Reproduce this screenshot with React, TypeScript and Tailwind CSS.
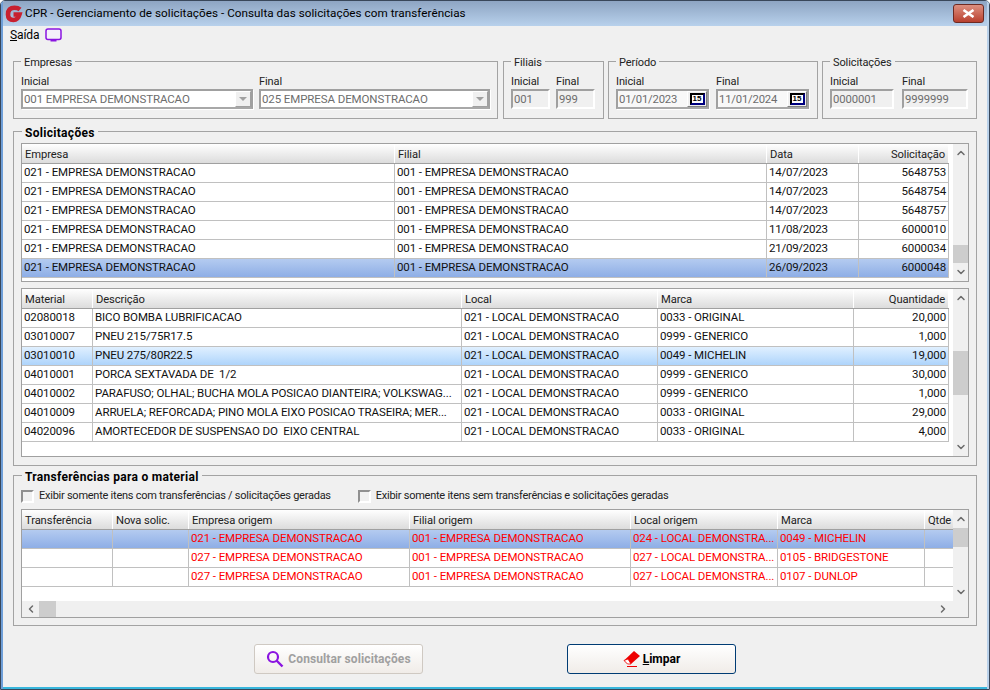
import { ChevronUp, ChevronDown, ChevronLeft, ChevronRight } from "lucide-react";

type Col = { title: string; width: string; right?: boolean; cellClass?: string };

const solicCols: Col[] = [
  { title: "Empresa", width: "w-[373px]" },
  { title: "Filial", width: "w-[372px]" },
  { title: "Data", width: "w-[92px]", cellClass: "tracking-[-0.25px]" },
  { title: "Solicitação", width: "w-[90px]", right: true },
];

const solicRows = [
  ["14/07/2023", "5648753"],
  ["14/07/2023", "5648754"],
  ["14/07/2023", "5648757"],
  ["11/08/2023", "6000010"],
  ["21/09/2023", "6000034"],
  ["26/09/2023", "6000048"],
].map(([d, n]) => ["021 - EMPRESA DEMONSTRACAO", "001 - EMPRESA DEMONSTRACAO", d, n]);

const matCols: Col[] = [
  { title: "Material", width: "w-[71px]" },
  { title: "Descrição", width: "w-[369px]" },
  { title: "Local", width: "w-[196px]" },
  { title: "Marca", width: "w-[196px]" },
  { title: "Quantidade", width: "w-[95px]", right: true },
];

const matRows = [
  ["02080018", "BICO BOMBA LUBRIFICACAO", "021 - LOCAL DEMONSTRACAO", "0033 - ORIGINAL", "20,000"],
  ["03010007", "PNEU 215/75R17.5", "021 - LOCAL DEMONSTRACAO", "0999 - GENERICO", "1,000"],
  ["03010010", "PNEU 275/80R22.5", "021 - LOCAL DEMONSTRACAO", "0049 - MICHELIN", "19,000"],
  ["04010001", "PORCA SEXTAVADA DE  1/2", "021 - LOCAL DEMONSTRACAO", "0999 - GENERICO", "30,000"],
  ["04010002", "PARAFUSO; OLHAL; BUCHA MOLA POSICAO DIANTEIRA; VOLKSWAG...", "021 - LOCAL DEMONSTRACAO", "0999 - GENERICO", "1,000"],
  ["04010009", "ARRUELA; REFORCADA; PINO MOLA EIXO POSICAO TRASEIRA; MER...", "021 - LOCAL DEMONSTRACAO", "0033 - ORIGINAL", "29,000"],
  ["04020096", "AMORTECEDOR DE SUSPENSAO DO  EIXO CENTRAL", "021 - LOCAL DEMONSTRACAO", "0033 - ORIGINAL", "4,000"],
];

const transCols: Col[] = [
  { title: "Transferência", width: "w-[91px]" },
  { title: "Nova solic.", width: "w-[76px]" },
  { title: "Empresa origem", width: "w-[221px]" },
  { title: "Filial origem", width: "w-[221px]" },
  { title: "Local origem", width: "w-[147px]" },
  { title: "Marca", width: "w-[147px]" },
  { title: "Qtde", width: "w-[40px]" },
];

const transRows = [
  ["", "", "021 - EMPRESA DEMONSTRACAO", "001 - EMPRESA DEMONSTRACAO", "024 - LOCAL DEMONSTRA...", "0049 - MICHELIN", ""],
  ["", "", "027 - EMPRESA DEMONSTRACAO", "001 - EMPRESA DEMONSTRACAO", "027 - LOCAL DEMONSTRA...", "0105 - BRIDGESTONE", ""],
  ["", "", "027 - EMPRESA DEMONSTRACAO", "001 - EMPRESA DEMONSTRACAO", "027 - LOCAL DEMONSTRA...", "0107 - DUNLOP", ""],
];

const sunken = "border-2 border-t-[#a0a0a0] border-l-[#a0a0a0] border-r-white border-b-white";
const framed = "border-2 border-[#a0a0a0] border-b-[#a8a8a8] shadow-[1px_1px_0_#ffffff]";

function Label({ children }: { children: string }) {
  return <div className="h-[15px] leading-[15px]">{children}</div>;
}

function TextBox({ value, width }: { value: string; width: string }) {
  return (
    <div className={`${width} h-[20px] ${sunken} px-px leading-[18px] text-[11.3px] text-[#6d6d6d]`}>{value}</div>
  );
}

function Combo({ value }: { value: string }) {
  return (
    <div className={`flex-1 h-[20px] ${framed} bg-white flex justify-between pl-px text-[11.5px] text-[#6d6d6d] leading-[17px]`}>
      {value}
      <span className="w-[16px] h-[16px] bg-[#f0f0f0] border border-t-white border-l-white border-r-[#a0a0a0] border-b-[#a0a0a0] flex items-center justify-center">
        <span className="border-x-[4px] border-x-transparent border-t-[4px] border-t-[#a0a0a0]" />
      </span>
    </div>
  );
}

function DateBox({ value }: { value: string }) {
  return (
    <div className={`w-[93px] h-[20px] ${framed} bg-[#f8f8f8] flex justify-between pl-px text-[11.3px] tracking-[-0.2px] text-[#6d6d6d] leading-[18px]`}>
      {value}
      <span className="w-[20px] h-[16px] bg-[#f0f0f0] border border-t-white border-l-white border-r-[#808080] border-b-[#808080] flex items-center justify-center">
        <span className="w-[15px] h-[12px] bg-white border-2 border-black border-r-[#000080] border-b-[#000080] text-[8px] leading-[8px] font-bold tracking-normal text-black text-center font-['Liberation_Sans',sans-serif]">
          15
        </span>
      </span>
    </div>
  );
}

function Group({
  title,
  bold,
  className,
  children,
}: {
  title: string;
  bold?: boolean;
  className: string;
  children: React.ReactNode;
}) {
  return (
    <fieldset className={`min-w-0 border border-[#a3a3a3] px-[7px] ${className}`}>
      <legend
        className={`px-[3px] h-[15px] ${bold ? "ml-px leading-[19px] font-bold text-black text-[12px] tracking-[0.3px]" : "leading-[17px]"}`}
      >
        {title}
      </legend>
      {children}
    </fieldset>
  );
}

function ScrollArrow({ dir }: { dir: "up" | "down" | "left" | "right" }) {
  const Icon = { up: ChevronUp, down: ChevronDown, left: ChevronLeft, right: ChevronRight }[dir];
  return <Icon size={12} strokeWidth={3} className="text-[#6b6b6b]" />;
}

function VScroll({ thumbTop, thumbHeight }: { thumbTop: string; thumbHeight: string }) {
  return (
    <div className="w-[15px] bg-[#f0f0f0] flex flex-col shrink-0">
      <div className="h-[18px] flex items-center justify-center shrink-0">
        <ScrollArrow dir="up" />
      </div>
      <div className="flex-1 flex flex-col">
        <div className={thumbTop} />
        <div className={`${thumbHeight} bg-[#cdcdcd]`} />
      </div>
      <div className="h-[18px] flex items-center justify-center shrink-0">
        <ScrollArrow dir="down" />
      </div>
    </div>
  );
}

function Grid({
  cols,
  rows,
  selected,
  selectedClass,
  red,
  className,
  scroll,
  children,
}: {
  cols: Col[];
  rows: string[][];
  selected: number;
  selectedClass: string;
  red?: boolean;
  className: string;
  scroll: React.ReactNode;
  children?: React.ReactNode;
}) {
  return (
    <div className={`border border-[#a0a0a0] bg-white flex flex-col ${className}`}>
      <div className="flex flex-1 min-h-0">
        <div className="flex-1 min-w-0 overflow-hidden">
          <div className="flex w-max h-[20px] border-b border-[#a0a0a0] bg-gradient-to-b from-white to-[#dcdcdc]">
            {cols.map((c) => (
              <div
                key={c.title}
                className={`${c.width} shrink-0 border-r border-white px-[3px] leading-[21px] text-[11.2px] whitespace-nowrap overflow-hidden ${c.right ? "text-right" : ""}`}
              >
                {c.title}
              </div>
            ))}
          </div>
          {rows.map((row, i) => (
            <div
              key={i}
              className={`flex w-max h-[19px] border-b border-[#c0c0c0] text-[11.5px] ${i === selected ? selectedClass : ""} ${red ? "text-[#ff0000]" : "text-[#111]"}`}
            >
              {row.map((cell, j) => (
                <div
                  key={j}
                  className={`${cols[j].width} ${cols[j].cellClass ?? ""} shrink-0 border-r border-[#c0c0c0] px-[2px] leading-[17px] whitespace-pre overflow-hidden ${cols[j].right ? "text-right" : ""}`}
                >
                  {cell}
                </div>
              ))}
            </div>
          ))}
        </div>
        {scroll}
      </div>
      {children}
    </div>
  );
}

function Check({ label }: { label: string }) {
  return (
    <label className="flex items-center gap-[5px] tracking-[-0.25px]">
      <span className="w-[13px] h-[13px] border-2 border-t-[#909090] border-l-[#909090] border-r-white border-b-white bg-[#f0f0f0]" />
      {label}
    </label>
  );
}

export default function App() {
  return (
    <div className="w-[990px] h-[690px] border border-[#39475a] rounded-t-[5px] overflow-hidden">
      <div className="h-full flex flex-col border-l-[2px] border-r-[2px] border-l-[#6f9fd8] border-r-[#b9d1ea] bg-[#b9d1ea] text-[11px] tracking-[-0.1px] text-[#222] font-['Roboto','Liberation_Sans',sans-serif]">
        <div className="h-[25px] shrink-0 flex items-center justify-between bg-gradient-to-b from-[#8ea5c3] to-[#b8d1ec] pl-[2px] pr-[3px]">
          <div className="flex items-center gap-[2px] pt-[1px] text-[11.7px] tracking-[0.04px] text-black">
            <svg width="18" height="18" viewBox="0 0 18 18">
              <path
                d="M15 4.5 Q13 2.8 9.5 2.8 Q3 2.8 3 9.5 Q3 15 8.5 15 Q13 15 14.5 9.5 H8.5"
                fill="none"
                stroke="#c8202f"
                strokeWidth="4.6"
              />
            </svg>
            CPR - Gerenciamento de solicitações - Consulta das solicitações com transferências
          </div>
          <div className="w-[31px] h-[19px] rounded-[3px] border border-[#6e2a22] bg-gradient-to-b from-[#dd8f80] to-[#b83f2e] flex items-center justify-center">
            <svg width="13" height="9" viewBox="0 0 13 9">
              <path d="M1.5 1 L11.5 8 M11.5 1 L1.5 8" stroke="#fff" strokeWidth="2.6" />
            </svg>
          </div>
        </div>
        <div className="flex-1 bg-[#f0f0f0] flex flex-col px-[10px]">
          <div className="h-[18px] flex items-center gap-[6px] -ml-[3px] text-[12px] text-black">
            <span>
              <span className="underline">S</span>aída
            </span>
            <svg width="17" height="14" viewBox="0 0 17 14">
              <rect x="1" y="1" width="15" height="10.5" rx="2" fill="#f4f0fa" stroke="#8a14e0" strokeWidth="1.5" />
              <rect x="5.5" y="11.5" width="6" height="2" fill="#8a14e0" />
            </svg>
          </div>

          <div className="flex gap-[4px] mt-[10px] h-[65px]">
            <Group title="Empresas" className="w-[485px] mr-px">
              <div className="flex gap-[6px] pt-[5px]">
                <div className="w-[232px] flex flex-col">
                  <Label>Inicial</Label>
                  <div className="flex"><Combo value="001 EMPRESA DEMONSTRACAO" /></div>
                </div>
                <div className="w-[231px] flex flex-col">
                  <Label>Final</Label>
                  <div className="flex"><Combo value="025 EMPRESA DEMONSTRACAO" /></div>
                </div>
              </div>
            </Group>
            <Group title="Filiais" className="w-[101px]">
              <div className="flex gap-[6px] pt-[5px]">
                <div><Label>Inicial</Label><TextBox value="001" width="w-[39px]" /></div>
                <div><Label>Final</Label><TextBox value="999" width="w-[39px]" /></div>
              </div>
            </Group>
            <Group title="Período" className="w-[210px]">
              <div className="flex gap-[7px] pt-[5px]">
                <div><Label>Inicial</Label><DateBox value="01/01/2023" /></div>
                <div><Label>Final</Label><DateBox value="11/01/2024" /></div>
              </div>
            </Group>
            <Group title="Solicitações" className="w-[155px]">
              <div className="flex gap-[8px] pt-[5px]">
                <div><Label>Inicial</Label><TextBox value="0000001" width="w-[64px]" /></div>
                <div><Label>Final</Label><TextBox value="9999999" width="w-[66px]" /></div>
              </div>
            </Group>
          </div>

          <Group title="Solicitações" bold className="mt-[5px] h-[342px]">
            <Grid
              cols={solicCols}
              rows={solicRows}
              selected={5}
              selectedClass="bg-gradient-to-b from-[#b4cbf0] to-[#8eaee6]"
              className="h-[139px] mt-[4px]"
              scroll={<VScroll thumbTop="h-[83px]" thumbHeight="h-[18px]" />}
            />
            <Grid
              cols={matCols}
              rows={matRows}
              selected={2}
              selectedClass="bg-gradient-to-b from-[#e0f0ff] to-[#aed4fb]"
              className="h-[169px] mt-[6px]"
              scroll={<VScroll thumbTop="h-[44px]" thumbHeight="h-[44px]" />}
            />
          </Group>

          <Group title="Transferências para o material" bold className="mt-[2px] h-[158px]">
            <div className="flex gap-[27px] h-[26px] items-center">
              <Check label="Exibir somente itens com transferências / solicitações geradas" />
              <Check label="Exibir somente itens sem transferências e solicitações geradas" />
            </div>
            <Grid
              cols={transCols}
              rows={transRows}
              selected={0}
              selectedClass="bg-gradient-to-b from-[#b4cbf0] to-[#8eaee6]"
              red
              className="h-[109px]"
              scroll={<VScroll thumbTop="h-0" thumbHeight="h-[19px]" />}
            >
              <div className="h-[16px] bg-[#f0f0f0] flex items-center shrink-0">
                <div className="w-[17px] flex justify-center"><ScrollArrow dir="left" /></div>
                <div className="w-[17px] h-full bg-[#cdcdcd]" />
                <div className="flex-1" />
                <div className="w-[16px] mr-[17px] flex justify-center"><ScrollArrow dir="right" /></div>
              </div>
            </Grid>
          </Group>

          <div className="flex mt-[18px] pl-[241px] gap-[144px]">
            <button className="w-[169px] h-[30px] rounded-[3px] border border-[#cfc9c2] bg-gradient-to-b from-white to-[#f0ece8] flex items-center justify-center gap-[4px] text-[12px] tracking-[0.1px] font-bold text-[#a0a0a0]">
              <svg width="18" height="18" viewBox="0 0 18 18">
                <circle cx="7" cy="7" r="5" fill="none" stroke="#8a14e0" strokeWidth="2.2" />
                <path d="M10.5 10.5 L16.5 16.5" stroke="#8a14e0" strokeWidth="2.4" />
              </svg>
              Consultar solicitações
            </button>
            <button className="w-[169px] h-[30px] rounded-[3px] border border-[#003c74] bg-gradient-to-b from-white to-[#f0ece8] flex items-center justify-center gap-[2px] text-[12px] tracking-normal font-bold text-black">
              <svg width="18" height="18" viewBox="0 0 18 18">
                <path d="M1 10.5 L11 1 L17 6 L8 14 H4.5 Z" fill="#ee0000" />
                <path d="M1 10.5 L4.5 14 H8 L5 9 Z" fill="#fff" stroke="#ee0000" strokeWidth="0.8" />
                <path d="M4 16.5 H14" stroke="#ee0000" strokeWidth="1" />
              </svg>
              <span>
                <span className="underline">L</span>impar
              </span>
            </button>
          </div>
        </div>
        <div className="h-[2px] shrink-0 bg-[#38b6dc]" />
      </div>
    </div>
  );
}
